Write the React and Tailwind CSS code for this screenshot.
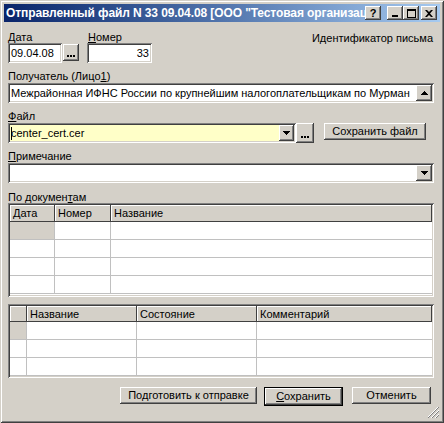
const sunken =
  'shadow-[inset_1px_1px_0_#808080,inset_-1px_-1px_0_#ffffff,inset_2px_2px_0_#404040,inset_-2px_-2px_0_#d4d0c8]';
const raised =
  'shadow-[inset_-1px_-1px_0_#404040,inset_1px_1px_0_#ffffff,inset_-2px_-2px_0_#808080,inset_2px_2px_0_#d4d0c8]';
const cellHead = 'shadow-[inset_-1px_-1px_0_#404040,inset_1px_1px_0_#ffffff]';

const Down = () => (
  <svg width="7" height="4" viewBox="0 0 7 4">
    <path d="M0 0h7L3.5 4z" fill="#000" shapeRendering="crispEdges" />
  </svg>
);

const Up = () => (
  <svg width="7" height="4" viewBox="0 0 7 4">
    <path d="M0 4h7L3.5 0z" fill="#000" shapeRendering="crispEdges" />
  </svg>
);

const Dots = () => (
  <svg width="8" height="2" viewBox="0 0 8 2">
    <rect x="0" y="0" width="2" height="2" fill="#000" />
    <rect x="3" y="0" width="2" height="2" fill="#000" />
    <rect x="6" y="0" width="2" height="2" fill="#000" />
  </svg>
);

const TitleBtn = ({ children, className = '' }) => (
  <div className={`w-[16px] h-[14px] bg-[#d4d0c8] flex items-center justify-center ${raised} ${className}`}>
    {children}
  </div>
);

const Label = ({ children, h = 'h-[13px]' }) => (
  <div className={`${h} leading-[13px] text-[11px] text-black whitespace-nowrap`}>{children}</div>
);

const Btn = ({ children, className = '', def = false }) => (
  <div className={def ? 'border border-black' : ''}>
    <div
      className={`h-full bg-[#d4d0c8] flex items-center justify-center text-[11px] text-black ${raised} ${className}`}
    >
      {children}
    </div>
  </div>
);

const Table1 = () => {
  const rows = [0, 1, 2, 3];
  return (
    <div className={`h-[94px] bg-white p-[2px] ${sunken} overflow-hidden`}>
      <div className="flex h-[17px] bg-[#d4d0c8] text-[11px] leading-[16px]">
        <div className={`w-[45px] pl-[3px] ${cellHead}`}>Дата</div>
        <div className={`w-[56px] pl-[3px] ${cellHead}`}>Номер</div>
        <div className={`flex-1 pl-[3px] ${cellHead}`}>Название</div>
      </div>
      {rows.map((r) => (
        <div key={r} className="flex h-[18px] border-b border-[#c0c0c0]">
          <div className={`w-[45px] border-r border-[#c0c0c0] ${r === 0 ? 'bg-[#d4d0c8]' : ''}`} />
          <div className="w-[56px] border-r border-[#c0c0c0]" />
          <div className="flex-1" />
        </div>
      ))}
    </div>
  );
};

const Table2 = () => {
  const rows = [0, 1, 2];
  return (
    <div className={`h-[74px] bg-white p-[2px] ${sunken} overflow-hidden`}>
      <div className="flex h-[16px] bg-[#d4d0c8] text-[11px] leading-[16px]">
        <div className={`w-[17px] ${cellHead}`} />
        <div className={`w-[110px] pl-[3px] ${cellHead}`}>Название</div>
        <div className={`w-[120px] pl-[3px] ${cellHead}`}>Состояние</div>
        <div className={`flex-1 pl-[3px] ${cellHead}`}>Комментарий</div>
      </div>
      {rows.map((r) => (
        <div key={r} className="flex h-[18px] border-b border-[#c0c0c0]">
          <div className={`w-[17px] border-r border-[#c0c0c0] ${r === 0 ? 'bg-[#d4d0c8]' : ''}`} />
          <div className="w-[110px] border-r border-[#c0c0c0]" />
          <div className="w-[120px] border-r border-[#c0c0c0]" />
          <div className="flex-1" />
        </div>
      ))}
    </div>
  );
};

export default function App() {
  return (
    <div className="font-['Liberation_Sans',Arial,sans-serif] text-black">
      <div className="relative w-[444px] h-[423px] bg-[#d4d0c8] p-[4px] shadow-[inset_1px_1px_0_#d4d0c8,inset_-1px_-1px_0_#404040,inset_2px_2px_0_#ffffff,inset_-2px_-2px_0_#808080] overflow-hidden">
        {/* title bar */}
        <div className="relative h-[18px] bg-gradient-to-r from-[#0a246a] to-[#a6caf0] overflow-hidden">
          <div className="w-[361px] overflow-hidden pl-[2px] leading-[18px] text-[12px] font-bold tracking-[-0.1px] text-white whitespace-nowrap">
            Отправленный файл N 33 09.04.08 [ООО "Тестовая организация"]
          </div>
          <div className="absolute top-[2px] left-[361px] flex">
            <TitleBtn>
              <span className="text-[11px] font-bold leading-[11px]">?</span>
            </TitleBtn>
            <TitleBtn className="ml-[6px]">
              <svg width="8" height="8" viewBox="0 0 8 8">
                <rect x="1" y="6" width="6" height="2" fill="#000" />
              </svg>
            </TitleBtn>
            <TitleBtn>
              <svg width="9" height="9" viewBox="0 0 9 9">
                <path d="M0 0h9v9H0z M1 2v6h7V2z" fill="#000" fillRule="evenodd" />
              </svg>
            </TitleBtn>
            <TitleBtn className="ml-[2px]">
              <svg width="8" height="7" viewBox="0 0 8 7">
                <path d="M0 0h2l2 2 2-2h2L5 3.5 8 7H6L4 5 2 7H0l3-3.5z" fill="#000" />
              </svg>
            </TitleBtn>
          </div>
        </div>

        <div className="pl-[4px] pr-[6px] pt-[9px]">
          {/* date / number */}
          <div className="flex">
            <div>
              <Label h="h-[12px]">
                <span className="underline">Д</span>ата
              </Label>
              <div className="flex">
                <div className={`w-[54px] h-[20px] bg-white pl-[3px] text-[11px] leading-[20px] ${sunken}`}>
                  09.04.08
                </div>
                <div className={`ml-[1px] mt-[1px] w-[16px] h-[17px] bg-[#d4d0c8] flex items-end justify-center pb-[4px] ${raised}`}>
                  <Dots />
                </div>
              </div>
            </div>
            <div className="ml-[8px]">
              <Label h="h-[12px]">
                <span className="pl-[1px] underline">Н</span>омер
              </Label>
              <div className={`w-[65px] h-[20px] bg-white pr-[3px] text-right text-[11px] leading-[20px] ${sunken}`}>
                33
              </div>
            </div>
            <div className="ml-auto mr-[1px] mt-[1px] text-[11px] leading-[13px]">Идентификатор письма</div>
          </div>

          {/* recipient */}
          <div className="mt-[7px]">
            <Label>
              Получатель (Лицо<span className="underline">1</span>)
            </Label>
            <div className={`relative h-[20px] bg-white pl-[3px] text-[11px] leading-[20px] whitespace-nowrap overflow-hidden ${sunken}`}>
              Межрайонная ИФНС России по крупнейшим налогоплательщикам по Мурман
              <div className={`absolute top-[2px] right-[2px] w-[16px] h-[16px] bg-[#d4d0c8] flex items-center justify-center ${raised}`}>
                <Up />
              </div>
            </div>
          </div>

          {/* file */}
          <div className="mt-[7px]">
            <Label>
              <span className="underline">Ф</span>айл
            </Label>
            <div className="flex">
              <div className={`relative w-[288px] h-[20px] bg-[#ffffc8] pl-[3px] text-[11px] leading-[20px] ${sunken}`}>
                <span className="absolute left-[3px] top-[4px] w-[1px] h-[13px] bg-black" />
                center_cert.cer
                <div className={`absolute top-[2px] right-[2px] w-[15px] h-[16px] bg-[#d4d0c8] flex items-center justify-center ${raised}`}>
                  <Down />
                </div>
              </div>
              <div className={`w-[18px] h-[20px] bg-[#d4d0c8] flex items-end justify-center pb-[5px] ${raised}`}>
                <Dots />
              </div>
              <div className="ml-[10px] w-[102px] h-[20px]">
                <Btn className="h-[20px]">Сохранить файл</Btn>
              </div>
            </div>
          </div>

          {/* note */}
          <div className="mt-[7px]">
            <Label>
              <span className="underline">П</span>римечание
            </Label>
            <div className={`relative h-[20px] bg-white ${sunken}`}>
              <div className={`absolute top-[2px] right-[2px] w-[16px] h-[16px] bg-[#d4d0c8] flex items-center justify-center ${raised}`}>
                <Down />
              </div>
            </div>
          </div>

          {/* documents */}
          <div className="mt-[8px]">
            <Label h="h-[12px]">
              По докумен<span className="underline">т</span>ам
            </Label>
            <Table1 />
          </div>

          <div className="mt-[7px]">
            <Table2 />
          </div>

          {/* buttons */}
          <div className="mt-[9px] flex justify-end pr-[3px]">
            <div className="w-[137px] h-[23px]">
              <Btn className="h-[23px]">Подготовить к отправке</Btn>
            </div>
            <div className="ml-[7px] w-[79px] h-[23px]">
              <Btn def className="h-[21px]">
                <span className="underline">С</span>охранить
              </Btn>
            </div>
            <div className="ml-[9px] w-[79px] h-[23px]">
              <Btn className="h-[23px]">Отменить</Btn>
            </div>
          </div>
        </div>

        {/* size grip */}
        <svg className="absolute right-[4px] bottom-[4px]" width="12" height="12" viewBox="0 0 12 12" shapeRendering="crispEdges">
          <path d="M11 0L0 11 M11 4L4 11 M11 8L8 11" stroke="#808080" strokeWidth="1.4" />
          <path d="M11 -1L-1 11 M11 3L3 11 M11 7L7 11" stroke="#ffffff" strokeWidth="1" />
        </svg>
      </div>
    </div>
  );
}
